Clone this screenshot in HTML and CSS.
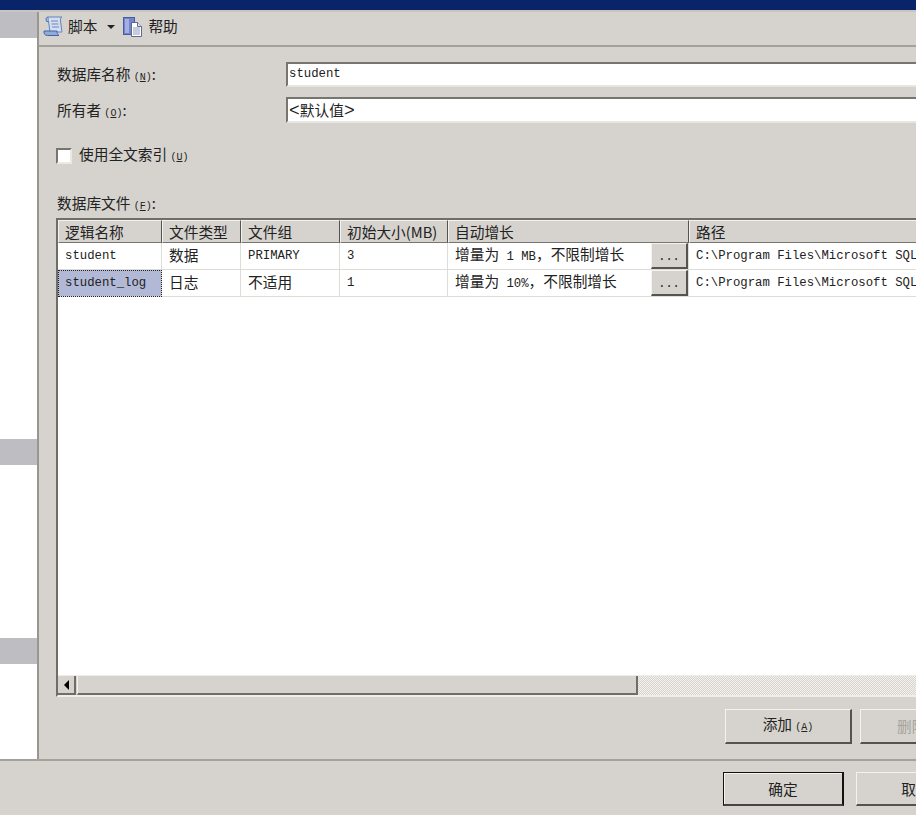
FILE: index.html
```html
<!DOCTYPE html>
<html lang="zh-CN">
<head>
<meta charset="UTF-8" />
<meta name="viewport" content="width=device-width, initial-scale=1" />
<title>新建数据库</title>
<link rel="stylesheet" href="styles.css">
</head>
<body>

<div class="titlebar"></div>

<div class="main">
  <div class="side">
    <div class="side-head"></div>
    <div class="side-head band-one"></div>
    <div class="side-head band-two"></div>
  </div>

  <div class="content">
    <div class="toolbar">
      <svg class="icon" width="20" height="21" viewBox="0 0 20 21">
        <path d="M5 1h14c-1.500 1-1.800 2.500-1.500 4l1 8c.2 2 .5 3 .5 3H7L5.500 5C5.300 3 5.500 2 5 1z" fill="#d5def0" stroke="#5f82bd"/>
        <path d="M5 1C3 1 2.500 3.500 3.500 5.500H6" fill="#9fb6da" stroke="#4f75b3"/>
        <path d="M1 15h13c0 2 .6 3.500 2 4.500H4.500C2 19.500.5 17.500 1 15z" fill="#8fabd8" stroke="#3f65a5"/>
        <path d="M8 5h7M8.500 8h7M9 11h7" stroke="#6f87b8" fill="none"/>
      </svg>
      <span class="tool-label">脚本</span>
      <span class="caret"></span>
      <svg class="icon" width="20" height="21" viewBox="0 0 20 21">
        <rect x="0.500" y="1.500" width="11" height="17" fill="#7484c8" stroke="#4a5aa5"/>
        <rect x="2" y="3" width="4" height="14" fill="#a4b0e2"/>
        <path d="M8.500 6.500h6l4 4v10h-10z" fill="#fff" stroke="#5b6b94"/>
        <path d="M14.500 6.500v4h4" fill="#dfe5f2" stroke="#5b6b94"/>
        <path d="M10 12h7M10 14h7M10 16h7M10 18h7" stroke="#8c99b8"/>
      </svg>
      <span class="tool-label">帮助</span>
    </div>

    <div class="form">
      <div class="field name-field">
        <label class="field-label">数据库名称 <span class="key">(<u>N</u>)</span>:</label>
        <div class="textbox">student</div>
      </div>
      <div class="field owner-field">
        <label class="field-label">所有者 <span class="key">(<u>O</u>)</span>:</label>
        <div class="textbox default-value"><span class="angle">&lt;</span>默认值<span class="angle">&gt;</span></div>
      </div>
      <div class="check-row">
        <span class="checkbox"></span>
        <span>使用全文索引 <span class="key">(<u>U</u>)</span></span>
      </div>
      <div class="files-label">数据库文件 <span class="key">(<u>F</u>)</span>:</div>

      <div class="filegrid">
        <div class="grid-body">
          <table>
            <colgroup>
              <col class="c-name"><col class="c-type"><col class="c-group"><col class="c-size"><col class="c-grow"><col class="c-path">
            </colgroup>
            <thead>
              <tr><th>逻辑名称</th><th>文件类型</th><th>文件组</th><th>初始大小(MB)</th><th>自动增长</th><th>路径</th></tr>
            </thead>
            <tbody>
              <tr>
                <td class="mono">student</td><td>数据</td><td class="mono">PRIMARY</td><td class="mono">3</td>
                <td class="grow"><div class="grow-cell"><span>增量为<span class="mono"> 1 MB</span>，不限制增长</span><span class="dots">...</span></div></td>
                <td class="mono">C:\Program Files\Microsoft SQL</td>
              </tr>
              <tr>
                <td class="mono selected">student_log</td><td>日志</td><td>不适用</td><td class="mono">1</td>
                <td class="grow"><div class="grow-cell"><span>增量为<span class="mono"> 10%</span>，不限制增长</span><span class="dots">...</span></div></td>
                <td class="mono">C:\Program Files\Microsoft SQL</td>
              </tr>
            </tbody>
          </table>
        </div>
        <div class="hscroll">
          <span class="arrow"><span class="arrow-left"></span></span>
          <span class="thumb"></span>
          <span class="track"></span>
        </div>
      </div>

      <div class="grid-actions">
        <button class="btn add-btn">添加 <span class="key">(<u>A</u>)</span></button>
        <button class="btn add-btn" disabled>删除 (R)</button>
      </div>
    </div>
  </div>
</div>

<div class="footer">
  <button class="btn ok-btn default-btn">确定</button>
  <button class="btn ok-btn">取消</button>
</div>

</body>
</html>
```
FILE: styles.css
```css
html, body {
  margin: 0;
  height: 815px;
  overflow: hidden;
}
body {
  width: 916px;
  background-color: #d6d3ce;
  color: #222;
  font-family: "Noto Sans CJK SC", "Liberation Sans", sans-serif;
  font-size: 14.7px;
  line-height: 18px;
}
.titlebar {
  height: 10px;
  background-color: #0a246a;
  border-bottom: 2px solid #c8c5be;
}
.main {
  display: flex;
  height: 747px;
}
.side {
  width: 37px;
  background-color: #fff;
  border-right: 2px solid #98968f;
  flex: none;
}
.side-head {
  height: 26px;
  background-color: #bebdc1;
}
.band-one {
  margin-top: 401px;
}
.band-two {
  margin-top: 173px;
}
.content {
  flex: 1;
  min-width: 0;
  overflow: hidden;
}
.toolbar {
  display: flex;
  align-items: center;
  height: 28px;
  padding: 0 0 5px 4px;
  border-bottom: 2px solid #a3a19b;
}
.icon {
  flex: none;
}
.tool-label {
  margin-left: 5px;
}
.caret {
  width: 0;
  height: 0;
  margin: 2px 8px 0 10px;
  border-left: 4px solid transparent;
  border-right: 4px solid transparent;
  border-top: 4px solid #222;
}
.form {
  padding: 15px 0 0 17px;
}
.field {
  display: flex;
  align-items: center;
}
.field-label {
  width: 229px;
  padding: 3px 0 0 1px;
  flex: none;
}
.name-field {
  height: 25px;
}
.owner-field {
  height: 26px;
  margin-top: 10px;
}
.key {
  font-family: "Liberation Mono", monospace;
  font-size: 10px;
}
.textbox {
  width: 700px;
  height: 100%;
  box-sizing: border-box;
  flex: none;
  padding: 1px 0 0 1px;
  background-color: #fff;
  border: 2px solid;
  border-color: #77756f #e8e6e1 #e8e6e1 #77756f;
  font-family: "Liberation Mono", monospace;
  font-size: 12.3px;
  line-height: 18px;
}
.default-value {
  padding-top: 2px;
  font-family: "Noto Sans CJK SC", sans-serif;
  font-size: 14.7px;
}
.angle {
  font-family: "Liberation Mono", monospace;
  font-size: 18px;
}
.check-row {
  display: flex;
  align-items: center;
  gap: 7px;
  height: 18px;
  margin-top: 24px;
}
.checkbox {
  width: 12px;
  height: 12px;
  background-color: #fff;
  border: 2px solid;
  border-color: #77756f #ece9e3 #ece9e3 #77756f;
}
.files-label {
  height: 18px;
  margin-top: 29px;
  padding-left: 1px;
}
.filegrid {
  height: 479px;
  box-sizing: border-box;
  margin-top: 6px;
  display: flex;
  flex-direction: column;
  background-color: #fff;
  border: 2px solid;
  border-color: #6f6d68 transparent #f0eeea #6f6d68;
  border-right: none;
  overflow: hidden;
}
.grid-body {
  flex: 1;
  overflow: hidden;
}
table {
  width: 859px;
  table-layout: fixed;
  border-collapse: separate;
  border-spacing: 0;
}
.c-name { width: 104px; }
.c-type { width: 79px; }
.c-group { width: 99px; }
.c-size { width: 108px; }
.c-grow { width: 241px; }
.c-path { width: 228px; }
th {
  height: 21px;
  padding: 0 0 0 6px;
  background-color: #d6d3ce;
  border: 1px solid;
  border-color: #f4f2ee #55534f #77756f #f4f2ee;
  font-weight: normal;
  text-align: left;
  white-space: nowrap;
  overflow: hidden;
}
td {
  height: 27px;
  box-sizing: border-box;
  padding: 0 0 3px 7px;
  border-right: 1px solid #dedcd6;
  border-bottom: 1px solid #dedcd6;
  white-space: nowrap;
  overflow: hidden;
}
.mono {
  font-family: "Liberation Mono", monospace;
  font-size: 12.3px;
}
td.mono {
  padding-bottom: 0;
}
td.selected {
  background-color: #b2b9d6;
  outline: 1px dotted #222;
  outline-offset: -1px;
}
td.grow {
  padding: 0 0 0 7px;
  vertical-align: top;
}
.grow-cell {
  display: flex;
  justify-content: space-between;
  height: 26px;
  line-height: 21px;
}
.dots {
  width: 37px;
  height: 26px;
  box-sizing: border-box;
  flex: none;
  background-color: #d6d3ce;
  border-style: solid;
  border-color: #f4f2ee #55534f #55534f #f4f2ee;
  border-width: 1px 2px 2px 1px;
  font-family: "Liberation Mono", monospace;
  font-size: 12px;
  line-height: 27px;
  text-align: center;
}
.hscroll {
  display: flex;
  height: 20px;
  box-sizing: border-box;
  flex: none;
  background-color: #d6d3ce;
  border-top: 1px solid #eeece7;
}
.arrow {
  display: flex;
  align-items: center;
  justify-content: center;
  width: 18px;
  box-sizing: border-box;
  border-right: 2px solid #6f6d68;
  border-bottom: 2px solid #6f6d68;
  margin-right: 1px;
}
.arrow-left {
  width: 0;
  height: 0;
  border-top: 5px solid transparent;
  border-bottom: 5px solid transparent;
  border-right: 5px solid #000;
}
.thumb {
  width: 561px;
  flex: none;
  box-sizing: border-box;
  border-left: 1px solid #f4f2ee;
  border-right: 2px solid #6f6d68;
  border-bottom: 2px solid #6f6d68;
}
.track {
  flex: 1;
  background-color: #f4f2ee;
  background-image: conic-gradient(#d6d3ce 25%, transparent 0 50%, #d6d3ce 0 75%, transparent 0);
  background-size: 2px 2px;
}
.grid-actions {
  display: flex;
  gap: 8px;
  margin-top: 12px;
  padding-left: 669px;
}
.btn {
  flex: none;
  padding: 0;
  background-color: #d6d3ce;
  border-style: solid;
  border-color: #f4f2ee #55534f #55534f #f4f2ee;
  border-width: 1px 2px 2px 1px;
  color: #222;
  font: inherit;
}
.btn:disabled {
  color: #a5a39d;
}
.add-btn {
  width: 127px;
  height: 35px;
}
.footer {
  display: flex;
  gap: 12px;
  height: 56px;
  box-sizing: border-box;
  padding: 11px 0 0 723px;
  border-top: 2px solid #a3a19b;
}
.ok-btn {
  width: 121px;
  height: 34px;
}
.default-btn {
  border-color: #111 #111 #444 #111;
  box-shadow: inset 1px 1px 0 #f4f2ee;
}
```
